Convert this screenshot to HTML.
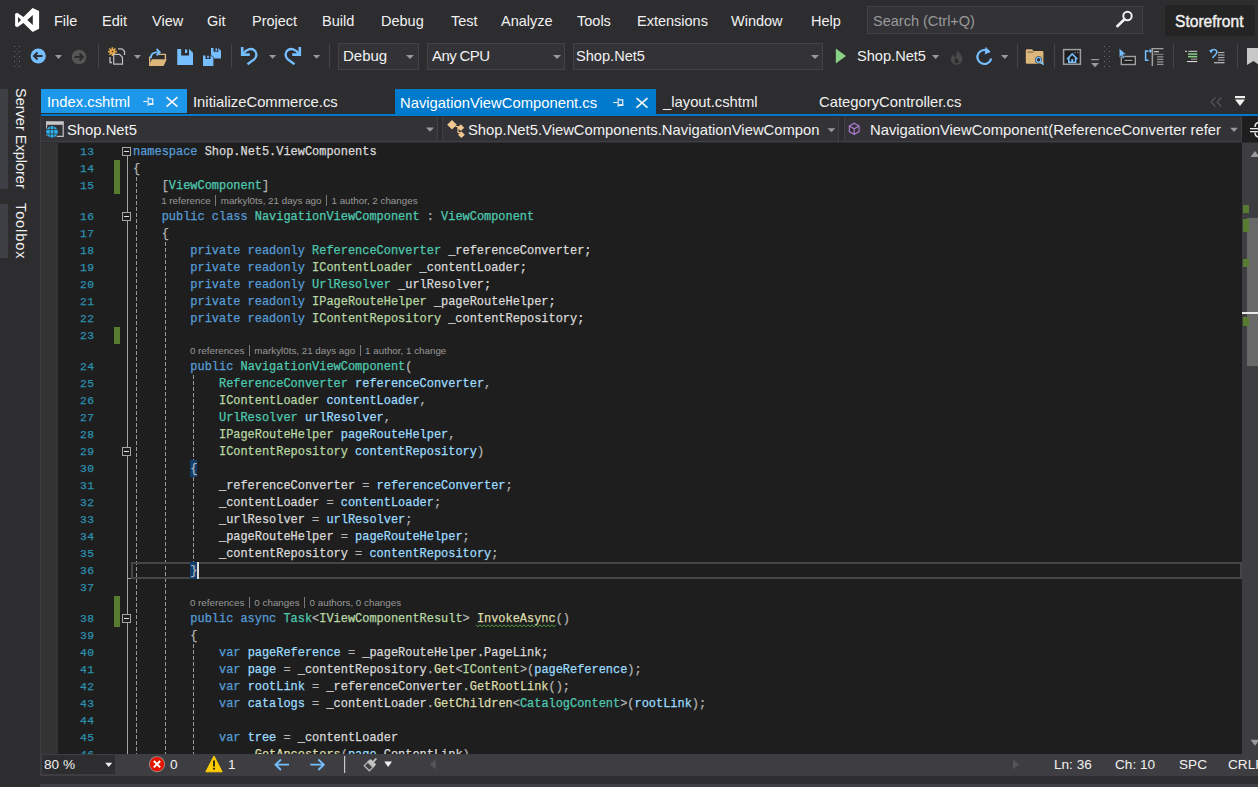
<!DOCTYPE html><html><head><meta charset="utf-8"><style>
html,body{margin:0;padding:0}
body{width:1258px;height:787px;overflow:hidden;background:#2d2d30;position:relative;font-family:"Liberation Sans", sans-serif}
.t,.b,.code,.ln,.cl{position:absolute}
.t{white-space:nowrap}
.code{font-family:"Liberation Mono", monospace;font-size:11.95px;line-height:17px;white-space:pre;height:17px;-webkit-text-stroke:0.25px currentColor}
.ln{font-family:"Liberation Mono", monospace;font-size:11.3px;line-height:17px;color:#2b91af;-webkit-text-stroke:0.25px #2b91af;left:58px;width:36.4px;letter-spacing:0.39px;text-align:right}
.cl{font-size:9.8px;line-height:14px;color:#999999;white-space:pre}
.sep{display:inline-block;width:1px;height:11px;background:#7a7a7a;margin:0 4.5px;vertical-align:-2px}
</style></head><body><svg class="b" style="left:0px;top:0px;" width="44" height="36" viewBox="0 0 44 36"><path d="M32.6 8.1 L39.1 10.9 V28.8 L32.6 32 L23.4 22.9 L17.3 27.2 L15.1 26 V13.8 L17.3 12.7 L23.4 17 Z M32.8 15 V24.9 L27.3 19.9 Z M18.1 16.8 V23.1 L21 19.9 Z" fill="#fff" fill-rule="evenodd"/></svg><div class="t" style="left:54px;top:13px;font-size:14.5px;line-height:16px;color:#f1f1f1;">File</div><div class="t" style="left:102px;top:13px;font-size:14.5px;line-height:16px;color:#f1f1f1;">Edit</div><div class="t" style="left:152px;top:13px;font-size:14.5px;line-height:16px;color:#f1f1f1;">View</div><div class="t" style="left:207px;top:13px;font-size:14.5px;line-height:16px;color:#f1f1f1;">Git</div><div class="t" style="left:252px;top:13px;font-size:14.5px;line-height:16px;color:#f1f1f1;">Project</div><div class="t" style="left:322px;top:13px;font-size:14.5px;line-height:16px;color:#f1f1f1;">Build</div><div class="t" style="left:381px;top:13px;font-size:14.5px;line-height:16px;color:#f1f1f1;">Debug</div><div class="t" style="left:451px;top:13px;font-size:14.5px;line-height:16px;color:#f1f1f1;">Test</div><div class="t" style="left:501px;top:13px;font-size:14.5px;line-height:16px;color:#f1f1f1;">Analyze</div><div class="t" style="left:577px;top:13px;font-size:14.5px;line-height:16px;color:#f1f1f1;">Tools</div><div class="t" style="left:637px;top:13px;font-size:14.5px;line-height:16px;color:#f1f1f1;">Extensions</div><div class="t" style="left:731px;top:13px;font-size:14.5px;line-height:16px;color:#f1f1f1;">Window</div><div class="t" style="left:811px;top:13px;font-size:14.5px;line-height:16px;color:#f1f1f1;">Help</div><div class="b" style="left:867px;top:6px;width:276px;height:28px;background:#333337;box-sizing:border-box;border:1px solid #3f3f46"></div><div class="t" style="left:873px;top:13px;font-size:14.5px;line-height:16px;color:#999999;">Search (Ctrl+Q)</div><div class="b" style="left:1165px;top:5px;width:90px;height:31px;background:#242425;"></div><div class="t" style="left:1175px;top:14px;font-size:15.6px;line-height:16px;color:#f1f1f1;-webkit-text-stroke:0.4px #f1f1f1">Storefront</div><div class="b" style="left:338px;top:43px;width:81px;height:27px;background:#333337;box-sizing:border-box;border:1px solid #434346"></div><div class="t" style="left:343px;top:48px;font-size:15px;line-height:16px;color:#f1f1f1;">Debug</div><svg class="b" style="left:406px;top:55px;" width="8" height="4" viewBox="0 0 8 4"><path d="M0 0 H8 L4 4 Z" fill="#999"/></svg><div class="b" style="left:427px;top:43px;width:138px;height:27px;background:#333337;box-sizing:border-box;border:1px solid #434346"></div><div class="t" style="left:432px;top:48px;font-size:15px;line-height:16px;color:#f1f1f1;letter-spacing:-0.6px">Any CPU</div><svg class="b" style="left:553px;top:55px;" width="8" height="4" viewBox="0 0 8 4"><path d="M0 0 H8 L4 4 Z" fill="#999"/></svg><div class="b" style="left:573px;top:43px;width:250px;height:27px;background:#333337;box-sizing:border-box;border:1px solid #434346"></div><div class="t" style="left:576px;top:48px;font-size:14.6px;line-height:16px;color:#f1f1f1;">Shop.Net5</div><svg class="b" style="left:811px;top:55px;" width="8" height="4" viewBox="0 0 8 4"><path d="M0 0 H8 L4 4 Z" fill="#999"/></svg><div class="b" style="left:0px;top:89px;width:8px;height:100px;background:#3f3f46;"></div><div class="b" style="left:0px;top:204px;width:8px;height:54px;background:#3f3f46;"></div><div class="t" style="left:12px;top:88px;width:18px;height:100px;"><div style="position:absolute;left:0;top:0;transform-origin:0 0;transform:translate(17px,0) rotate(90deg);white-space:nowrap;font-size:14.5px;line-height:17px;color:#f1f1f1">Server Explorer</div></div><div class="t" style="left:12px;top:203px;width:18px;height:60px;"><div style="position:absolute;left:0;top:0;transform-origin:0 0;transform:translate(17px,0) rotate(90deg);white-space:nowrap;font-size:14.5px;line-height:17px;color:#f1f1f1;letter-spacing:0.9px">Toolbox</div></div><div class="b" style="left:41px;top:89px;width:146px;height:24px;background:#1c97ea;"></div><div class="t" style="left:47px;top:94px;font-size:14.8px;line-height:16px;color:#ffffff;">Index.cshtml</div><div class="t" style="left:193px;top:94px;font-size:14.8px;line-height:16px;color:#f1f1f1;">InitializeCommerce.cs</div><div class="b" style="left:395px;top:89px;width:261px;height:25px;background:#007acc;"></div><div class="t" style="left:400px;top:95px;font-size:14.8px;line-height:16px;color:#ffffff;">NavigationViewComponent.cs</div><div class="t" style="left:663px;top:94px;font-size:14.8px;line-height:16px;color:#f1f1f1;">_layout.cshtml</div><div class="t" style="left:819px;top:94px;font-size:14.8px;line-height:16px;color:#f1f1f1;">CategoryController.cs</div><div class="b" style="left:41px;top:114px;width:1217px;height:2px;background:#007acc;"></div><div class="b" style="left:41px;top:116px;width:1201px;height:26px;background:#333337;"></div><div class="b" style="left:41px;top:116px;width:1201px;height:1px;background:#2d2d30;"></div><div class="b" style="left:40px;top:116px;width:1px;height:660px;background:#3f3f46;"></div><div class="b" style="left:438px;top:117px;width:4px;height:25px;background:#2d2d30;"></div><div class="b" style="left:839px;top:117px;width:5px;height:25px;background:#2d2d30;"></div><div class="b" style="left:437px;top:117px;width:1px;height:24px;background:#3f3f46;"></div><div class="b" style="left:442px;top:117px;width:1px;height:24px;background:#3f3f46;"></div><div class="b" style="left:838px;top:117px;width:1px;height:24px;background:#3f3f46;"></div><div class="b" style="left:844px;top:117px;width:1px;height:24px;background:#3f3f46;"></div><div class="b" style="left:1241px;top:117px;width:1px;height:24px;background:#3f3f46;"></div><div class="b" style="left:41px;top:141px;width:1201px;height:1px;background:#3f3f46;"></div><div class="b" style="left:41px;top:142px;width:1201px;height:1px;background:#2d2d30;"></div><div class="t" style="left:67px;top:122px;font-size:14.8px;line-height:16px;color:#f1f1f1;">Shop.Net5</div><div class="t" style="left:468px;top:122px;font-size:14.8px;line-height:16px;color:#f1f1f1;">Shop.Net5.ViewComponents.NavigationViewCompon</div><div class="t" style="left:870px;top:122px;font-size:14.8px;line-height:16px;color:#f1f1f1;">NavigationViewComponent(ReferenceConverter refer</div><div class="b" style="left:41px;top:143px;width:17px;height:611px;background:#333333;"></div><div class="b" style="left:58px;top:143px;width:1184px;height:611px;background:#1e1e1e;"></div><div class="b" style="left:1242px;top:143px;width:16px;height:611px;background:#3e3e42;"></div><div class="b" style="left:114px;top:160px;width:6px;height:34px;background:#587c2f;"></div><div class="b" style="left:114px;top:327px;width:6px;height:17px;background:#587c2f;"></div><div class="b" style="left:114px;top:596px;width:6px;height:31px;background:#587c2f;"></div><div class="b" style="left:127px;top:156px;width:1px;height:598px;background:#a5a5a5;"></div><div class="b" style="left:136px;top:177px;width:1px;height:577px;background:repeating-linear-gradient(to bottom,#9a9a9a 0 4px,transparent 4px 6px)"></div><div class="b" style="left:165px;top:242px;width:1px;height:512px;background:repeating-linear-gradient(to bottom,#9a9a9a 0 4px,transparent 4px 6px)"></div><div class="b" style="left:193px;top:375px;width:1px;height:85px;background:repeating-linear-gradient(to bottom,#9a9a9a 0 4px,transparent 4px 6px)"></div><div class="b" style="left:193px;top:477px;width:1px;height:85px;background:repeating-linear-gradient(to bottom,#9a9a9a 0 4px,transparent 4px 6px)"></div><div class="b" style="left:193px;top:644px;width:1px;height:110px;background:repeating-linear-gradient(to bottom,#9a9a9a 0 4px,transparent 4px 6px)"></div><div class="b" style="left:131px;top:562px;width:1111px;height:17px;background:transparent;box-sizing:border-box;border:2px solid #464646"></div><div class="b" style="left:190px;top:460px;width:7px;height:17px;background:#113d6f;"></div><div class="b" style="left:190px;top:562px;width:7px;height:17px;background:#113d6f;"></div><div class="b" style="left:122px;top:147px;width:9px;height:9px;box-sizing:border-box;border:1px solid #a5a5a5;background:#1e1e1e"><div style="position:absolute;left:1px;top:3px;width:5px;height:1px;background:#e0e0e0"></div></div><div class="b" style="left:122px;top:212px;width:9px;height:9px;box-sizing:border-box;border:1px solid #a5a5a5;background:#1e1e1e"><div style="position:absolute;left:1px;top:3px;width:5px;height:1px;background:#e0e0e0"></div></div><div class="b" style="left:122px;top:447px;width:9px;height:9px;box-sizing:border-box;border:1px solid #a5a5a5;background:#1e1e1e"><div style="position:absolute;left:1px;top:3px;width:5px;height:1px;background:#e0e0e0"></div></div><div class="b" style="left:122px;top:614px;width:9px;height:9px;box-sizing:border-box;border:1px solid #a5a5a5;background:#1e1e1e"><div style="position:absolute;left:1px;top:3px;width:5px;height:1px;background:#e0e0e0"></div></div><div class="b" style="left:127px;top:578px;width:4px;height:1px;background:#a5a5a5;"></div><div class="b" style="left:197px;top:562px;width:1.5px;height:17px;background:#dcdcdc;"></div><div class="ln" style="top:143.5px">13</div><div class="code" style="left:133px;top:144px"><span style="color:#569cd6">namespace</span><span style="color:#dadada"> Shop.Net5.ViewComponents</span></div><div class="ln" style="top:160.5px">14</div><div class="code" style="left:133px;top:161px"><span style="color:#b4b4b4">{</span></div><div class="ln" style="top:177.5px">15</div><div class="code" style="left:133px;top:178px"><span style="color:#b4b4b4">    [</span><span style="color:#4ec9b0">ViewComponent</span><span style="color:#b4b4b4">]</span></div><div class="cl" style="left:161.2px;top:194px">1 reference<i class="sep"></i>markyl0ts, 21 days ago<i class="sep"></i>1 author, 2 changes</div><div class="ln" style="top:208.5px">16</div><div class="code" style="left:133px;top:209px"><span style="color:#569cd6">    public class </span><span style="color:#4ec9b0">NavigationViewComponent</span><span style="color:#b4b4b4"> : </span><span style="color:#4ec9b0">ViewComponent</span></div><div class="ln" style="top:225.5px">17</div><div class="code" style="left:133px;top:226px"><span style="color:#b4b4b4">    {</span></div><div class="ln" style="top:242.5px">18</div><div class="code" style="left:133px;top:243px"><span style="color:#569cd6">        private readonly </span><span style="color:#4ec9b0">ReferenceConverter</span><span style="color:#dadada"> _referenceConverter;</span></div><div class="ln" style="top:259.5px">19</div><div class="code" style="left:133px;top:260px"><span style="color:#569cd6">        private readonly </span><span style="color:#b8d7a3">IContentLoader</span><span style="color:#dadada"> _contentLoader;</span></div><div class="ln" style="top:276.5px">20</div><div class="code" style="left:133px;top:277px"><span style="color:#569cd6">        private readonly </span><span style="color:#4ec9b0">UrlResolver</span><span style="color:#dadada"> _urlResolver;</span></div><div class="ln" style="top:293.5px">21</div><div class="code" style="left:133px;top:294px"><span style="color:#569cd6">        private readonly </span><span style="color:#b8d7a3">IPageRouteHelper</span><span style="color:#dadada"> _pageRouteHelper;</span></div><div class="ln" style="top:310.5px">22</div><div class="code" style="left:133px;top:311px"><span style="color:#569cd6">        private readonly </span><span style="color:#b8d7a3">IContentRepository</span><span style="color:#dadada"> _contentRepository;</span></div><div class="ln" style="top:327.5px">23</div><div class="code" style="left:133px;top:328px"></div><div class="cl" style="left:189.9px;top:344px">0 references<i class="sep"></i>markyl0ts, 21 days ago<i class="sep"></i>1 author, 1 change</div><div class="ln" style="top:358.5px">24</div><div class="code" style="left:133px;top:359px"><span style="color:#569cd6">        public </span><span style="color:#4ec9b0">NavigationViewComponent</span><span style="color:#b4b4b4">(</span></div><div class="ln" style="top:375.5px">25</div><div class="code" style="left:133px;top:376px"><span style="color:#4ec9b0">            ReferenceConverter</span><span style="color:#dadada"> </span><span style="color:#9cdcfe">referenceConverter</span><span style="color:#b4b4b4">,</span></div><div class="ln" style="top:392.5px">26</div><div class="code" style="left:133px;top:393px"><span style="color:#b8d7a3">            IContentLoader</span><span style="color:#dadada"> </span><span style="color:#9cdcfe">contentLoader</span><span style="color:#b4b4b4">,</span></div><div class="ln" style="top:409.5px">27</div><div class="code" style="left:133px;top:410px"><span style="color:#4ec9b0">            UrlResolver</span><span style="color:#dadada"> </span><span style="color:#9cdcfe">urlResolver</span><span style="color:#b4b4b4">,</span></div><div class="ln" style="top:426.5px">28</div><div class="code" style="left:133px;top:427px"><span style="color:#b8d7a3">            IPageRouteHelper</span><span style="color:#dadada"> </span><span style="color:#9cdcfe">pageRouteHelper</span><span style="color:#b4b4b4">,</span></div><div class="ln" style="top:443.5px">29</div><div class="code" style="left:133px;top:444px"><span style="color:#b8d7a3">            IContentRepository</span><span style="color:#dadada"> </span><span style="color:#9cdcfe">contentRepository</span><span style="color:#b4b4b4">)</span></div><div class="ln" style="top:460.5px">30</div><div class="code" style="left:133px;top:461px"><span style="color:#b4b4b4">        {</span></div><div class="ln" style="top:477.5px">31</div><div class="code" style="left:133px;top:478px"><span style="color:#dadada">            _referenceConverter</span><span style="color:#b4b4b4"> = </span><span style="color:#9cdcfe">referenceConverter</span><span style="color:#b4b4b4">;</span></div><div class="ln" style="top:494.5px">32</div><div class="code" style="left:133px;top:495px"><span style="color:#dadada">            _contentLoader</span><span style="color:#b4b4b4"> = </span><span style="color:#9cdcfe">contentLoader</span><span style="color:#b4b4b4">;</span></div><div class="ln" style="top:511.5px">33</div><div class="code" style="left:133px;top:512px"><span style="color:#dadada">            _urlResolver</span><span style="color:#b4b4b4"> = </span><span style="color:#9cdcfe">urlResolver</span><span style="color:#b4b4b4">;</span></div><div class="ln" style="top:528.5px">34</div><div class="code" style="left:133px;top:529px"><span style="color:#dadada">            _pageRouteHelper</span><span style="color:#b4b4b4"> = </span><span style="color:#9cdcfe">pageRouteHelper</span><span style="color:#b4b4b4">;</span></div><div class="ln" style="top:545.5px">35</div><div class="code" style="left:133px;top:546px"><span style="color:#dadada">            _contentRepository</span><span style="color:#b4b4b4"> = </span><span style="color:#9cdcfe">contentRepository</span><span style="color:#b4b4b4">;</span></div><div class="ln" style="top:562.5px">36</div><div class="code" style="left:133px;top:563px"><span style="color:#b4b4b4">        }</span></div><div class="ln" style="top:579.5px">37</div><div class="code" style="left:133px;top:580px"></div><div class="cl" style="left:189.9px;top:596px">0 references<i class="sep"></i>0 changes<i class="sep"></i>0 authors, 0 changes</div><div class="ln" style="top:610.5px">38</div><div class="code" style="left:133px;top:611px"><span style="color:#569cd6">        public async </span><span style="color:#4ec9b0">Task</span><span style="color:#b4b4b4">&lt;</span><span style="color:#b8d7a3">IViewComponentResult</span><span style="color:#b4b4b4">&gt; </span><span style="color:#dcdcaa">InvokeAsync</span><span style="color:#b4b4b4">()</span></div><div class="ln" style="top:627.5px">39</div><div class="code" style="left:133px;top:628px"><span style="color:#b4b4b4">        {</span></div><div class="ln" style="top:644.5px">40</div><div class="code" style="left:133px;top:645px"><span style="color:#569cd6">            var </span><span style="color:#9cdcfe">pageReference</span><span style="color:#b4b4b4"> = </span><span style="color:#dadada">_pageRouteHelper</span><span style="color:#dadada">.PageLink;</span></div><div class="ln" style="top:661.5px">41</div><div class="code" style="left:133px;top:662px"><span style="color:#569cd6">            var </span><span style="color:#9cdcfe">page</span><span style="color:#b4b4b4"> = </span><span style="color:#dadada">_contentRepository</span><span style="color:#b4b4b4">.</span><span style="color:#dcdcaa">Get</span><span style="color:#b4b4b4">&lt;</span><span style="color:#b8d7a3">IContent</span><span style="color:#b4b4b4">&gt;(</span><span style="color:#9cdcfe">pageReference</span><span style="color:#b4b4b4">);</span></div><div class="ln" style="top:678.5px">42</div><div class="code" style="left:133px;top:679px"><span style="color:#569cd6">            var </span><span style="color:#9cdcfe">rootLink</span><span style="color:#b4b4b4"> = </span><span style="color:#dadada">_referenceConverter</span><span style="color:#b4b4b4">.</span><span style="color:#dcdcaa">GetRootLink</span><span style="color:#b4b4b4">();</span></div><div class="ln" style="top:695.5px">43</div><div class="code" style="left:133px;top:696px"><span style="color:#569cd6">            var </span><span style="color:#9cdcfe">catalogs</span><span style="color:#b4b4b4"> = </span><span style="color:#dadada">_contentLoader</span><span style="color:#b4b4b4">.</span><span style="color:#dcdcaa">GetChildren</span><span style="color:#b4b4b4">&lt;</span><span style="color:#4ec9b0">CatalogContent</span><span style="color:#b4b4b4">&gt;(</span><span style="color:#9cdcfe">rootLink</span><span style="color:#b4b4b4">);</span></div><div class="ln" style="top:712.5px">44</div><div class="code" style="left:133px;top:713px"></div><div class="ln" style="top:729.5px">45</div><div class="code" style="left:133px;top:730px"><span style="color:#569cd6">            var </span><span style="color:#9cdcfe">tree</span><span style="color:#b4b4b4"> = </span><span style="color:#dadada">_contentLoader</span></div><div class="ln" style="top:746.5px">46</div><div class="code" style="left:133px;top:747px"><span style="color:#b4b4b4">                .</span><span style="color:#dcdcaa">GetAncestors</span><span style="color:#b4b4b4">(</span><span style="color:#9cdcfe">page</span><span style="color:#b4b4b4">.</span><span style="color:#dadada">ContentLink</span><span style="color:#b4b4b4">)</span></div><div class="b" style="left:40px;top:754px;width:1218px;height:22px;background:#3e3e42;"></div><div class="b" style="left:42px;top:755px;width:73px;height:19px;background:#2d2d30;"></div><div class="t" style="left:44px;top:757px;font-size:13.6px;line-height:16px;color:#f1f1f1;">80 %</div><div class="t" style="left:170px;top:757px;font-size:13.6px;line-height:16px;color:#f1f1f1;">0</div><div class="t" style="left:228px;top:757px;font-size:13.6px;line-height:16px;color:#f1f1f1;">1</div><div class="t" style="left:1054px;top:757px;font-size:13.6px;line-height:16px;color:#f1f1f1;">Ln: 36</div><div class="t" style="left:1115px;top:757px;font-size:13.6px;line-height:16px;color:#f1f1f1;">Ch: 10</div><div class="t" style="left:1179px;top:757px;font-size:13.6px;line-height:16px;color:#f1f1f1;">SPC</div><div class="t" style="left:1228px;top:757px;font-size:13.6px;line-height:16px;color:#f1f1f1;">CRLF</div><div class="t" style="left:857px;top:48px;font-size:14.6px;line-height:16px;color:#f1f1f1;">Shop.Net5</div><div class="b" style="left:1247px;top:218px;width:11px;height:148px;background:#686868;"></div><div class="b" style="left:1243px;top:204.7px;width:5.5px;height:8.600000000000023px;background:#587c2f;"></div><div class="b" style="left:1243px;top:218.8px;width:5.5px;height:13.399999999999977px;background:#587c2f;"></div><div class="b" style="left:1243px;top:258.5px;width:5.5px;height:8.199999999999989px;background:#587c2f;"></div><div class="b" style="left:1243px;top:316.5px;width:5.5px;height:9.800000000000011px;background:#587c2f;"></div><div class="b" style="left:1242px;top:312px;width:16px;height:2px;background:#e8e8e8;"></div><div class="b" style="left:1242px;top:116px;width:16px;height:26px;background:#1e1e1e;"></div><svg class="b" style="left:476px;top:624px" width="80" height="4" viewBox="0 0 80 4"><path d="M0 0.8 L2 2.8 L4 0.8 L6 2.8 L8 0.8 L10 2.8 L12 0.8 L14 2.8 L16 0.8 L18 2.8 L20 0.8 L22 2.8 L24 0.8 L26 2.8 L28 0.8 L30 2.8 L32 0.8 L34 2.8 L36 0.8 L38 2.8 L40 0.8 L42 2.8 L44 0.8 L46 2.8 L48 0.8 L50 2.8 L52 0.8 L54 2.8 L56 0.8 L58 2.8 L60 0.8 L62 2.8 L64 0.8 L66 2.8 L68 0.8 L70 2.8 L72 0.8 L74 2.8 L76 0.8 L78 2.8 L80 0.8" stroke="#57a64a" stroke-width="1" fill="none"/></svg><div class="b" style="left:40px;top:784px;width:1218px;height:3px;background:#3f3f46;"></div><svg class="b" style="left:0;top:0" width="1258" height="787" viewBox="0 0 1258 787"><rect x="14" y="46" width="1" height="1" fill="#6e6e6e"/><rect x="19" y="46" width="1" height="1" fill="#6e6e6e"/><rect x="16.5" y="48.5" width="1" height="1" fill="#5a5a5a"/><rect x="14" y="51" width="1" height="1" fill="#6e6e6e"/><rect x="19" y="51" width="1" height="1" fill="#6e6e6e"/><rect x="16.5" y="53.5" width="1" height="1" fill="#5a5a5a"/><rect x="14" y="56" width="1" height="1" fill="#6e6e6e"/><rect x="19" y="56" width="1" height="1" fill="#6e6e6e"/><rect x="16.5" y="58.5" width="1" height="1" fill="#5a5a5a"/><rect x="14" y="61" width="1" height="1" fill="#6e6e6e"/><rect x="19" y="61" width="1" height="1" fill="#6e6e6e"/><rect x="16.5" y="63.5" width="1" height="1" fill="#5a5a5a"/><rect x="14" y="66" width="1" height="1" fill="#6e6e6e"/><rect x="19" y="66" width="1" height="1" fill="#6e6e6e"/><rect x="1104" y="46" width="1" height="1" fill="#6e6e6e"/><rect x="1109" y="46" width="1" height="1" fill="#6e6e6e"/><rect x="1106.5" y="48.5" width="1" height="1" fill="#5a5a5a"/><rect x="1104" y="51" width="1" height="1" fill="#6e6e6e"/><rect x="1109" y="51" width="1" height="1" fill="#6e6e6e"/><rect x="1106.5" y="53.5" width="1" height="1" fill="#5a5a5a"/><rect x="1104" y="56" width="1" height="1" fill="#6e6e6e"/><rect x="1109" y="56" width="1" height="1" fill="#6e6e6e"/><rect x="1106.5" y="58.5" width="1" height="1" fill="#5a5a5a"/><rect x="1104" y="61" width="1" height="1" fill="#6e6e6e"/><rect x="1109" y="61" width="1" height="1" fill="#6e6e6e"/><rect x="1106.5" y="63.5" width="1" height="1" fill="#5a5a5a"/><rect x="1104" y="66" width="1" height="1" fill="#6e6e6e"/><rect x="1109" y="66" width="1" height="1" fill="#6e6e6e"/><circle cx="38.2" cy="56" r="7.6" fill="#75beff"/><path d="M42.5 56 H34.5 M37.5 52.5 L34 56 L37.5 59.5" stroke="#2d2d30" stroke-width="2" fill="none"/><path d="M55 55 H62 L58.5 59 Z" fill="#999999"/><circle cx="79" cy="57" r="7.3" fill="#555555"/><path d="M74.5 57 H82.5 M79.5 53.5 L83 57 L79.5 60.5" stroke="#2d2d30" stroke-width="2" fill="none"/><rect x="98" y="44" width="1" height="24" fill="#464646"/><rect x="231" y="44" width="1" height="24" fill="#464646"/><rect x="329" y="44" width="1" height="24" fill="#464646"/><rect x="1017" y="44" width="1" height="24" fill="#464646"/><rect x="1054" y="44" width="1" height="24" fill="#464646"/><rect x="1173" y="44" width="1" height="24" fill="#464646"/><rect x="1237" y="44" width="1" height="24" fill="#464646"/><path d="M112.4 47.2 V56 M108 51.6 H116.8 M109.3 48.5 L115.5 54.7 M115.5 48.5 L109.3 54.7" stroke="#e8a94a" stroke-width="1.6"/><circle cx="112.4" cy="51.6" r="2.2" fill="#e8a94a"/><circle cx="112.4" cy="51.6" r="0.8" fill="#2d2d30"/><path d="M118 48.8 H122 L124.5 51.3 V55" stroke="#c0c0c0" stroke-width="1.3" fill="none"/><path d="M110 57 V62.5 H112" stroke="#c0c0c0" stroke-width="1.3" fill="none"/><path d="M113.7 54.3 H119.5 L122.5 57.3 V64.2 H113.7 Z" stroke="#c0c0c0" stroke-width="1.2" fill="#333337"/><path d="M134 55 H141 L137.5 59 Z" fill="#999999"/><path d="M149.7 65.5 V56.5 M157.6 54.4 H165.4 V59.5" stroke="#dcb67a" stroke-width="1.4" fill="none"/><path d="M151.8 59.3 H166.8 L163.6 65.9 H149 Z" fill="#dcb67a"/><path d="M151 58.2 C150.6 53.8 153.5 52.2 158.8 52.2" stroke="#75beff" stroke-width="1.8" fill="none"/><path d="M156.6 49 L159.8 52.2 L156.6 55.4" stroke="#75beff" stroke-width="1.8" fill="none"/><path d="M177.2 48.9 H189.2 L193 52.7 V65 H177.2 Z M181.2 48.9 V55.6 H189 V48.9 Z" fill="#75beff" fill-rule="evenodd"/><rect x="185" y="49.5" width="2.2" height="3.5" fill="#75beff"/><path d="M211 48.1 H218.3 L221 50.8 V58.4 H211 Z M213.5 48.1 V51.8 H218.3 V48.1 Z" fill="#75beff" fill-rule="evenodd"/><path d="M210.8 55.4 L214 58.6 M209 56.4" stroke="#2d2d30" stroke-width="1.2"/><path d="M203 55.4 H210.8 L213.4 58 V65.9 H203 Z M205.5 55.4 V59 H210.5 V55.4 Z" fill="#75beff" fill-rule="evenodd"/><rect x="207.2" y="55.8" width="1.6" height="2.4" fill="#75beff"/><rect x="215.5" y="48.4" width="1.6" height="2.4" fill="#75beff"/><g ><path d="M242.2 47 V54.6 H249.8" stroke="#75beff" stroke-width="2.6" fill="none"/><path d="M243.4 53.4 C246.5 49 251 48 254 50 C257.3 52.4 257 56.6 254.4 59.2 L247.5 64.2" stroke="#75beff" stroke-width="2.4" fill="none"/></g><g transform="translate(542 0) scale(-1 1)"><path d="M242.2 47 V54.6 H249.8" stroke="#75beff" stroke-width="2.6" fill="none"/><path d="M243.4 53.4 C246.5 49 251 48 254 50 C257.3 52.4 257 56.6 254.4 59.2 L247.5 64.2" stroke="#75beff" stroke-width="2.4" fill="none"/></g><path d="M269 55 H276.2 L272.6 58.8 Z" fill="#999999"/><path d="M313 55 H320.2 L316.6 58.8 Z" fill="#999999"/><path d="M835.8 48.5 L846 56 L835.8 63.5 Z" fill="#89d185"/><path d="M932 55 H939.3 L935.65 59 Z" fill="#999999"/><path d="M956.5 50.2 C960.5 53 962.8 56.5 962.3 60 C961.8 63.2 959.3 64.8 956.6 64.8 C953.3 64.8 950.8 62.6 950.8 59.6 C950.8 57.4 952 55.6 953.2 54.2 C953.4 55.8 954 57 955 57.6 C956.6 55.4 957.2 52.8 956.5 50.2 Z M956.6 63.3 C955 63.3 954.2 62 954.4 60.6 C954.6 59.4 955.5 58.6 956.2 57.6 C956.8 59 958.6 59.6 958.7 61 C958.8 62.4 957.8 63.3 956.6 63.3 Z" fill="#4a4a4a" fill-rule="evenodd"/><path d="M989.5 52.2 A7 7 0 1 0 991.2 58.5" stroke="#75beff" stroke-width="2.2" fill="none"/><path d="M985.5 46.8 L990.5 51.8 L984.8 54.6 Z" fill="#75beff"/><path d="M1001 55 H1008.5 L1004.75 59 Z" fill="#999999"/><path d="M1025.8 50.5 Q1025.8 49.3 1027 49.3 H1032 L1033.5 51 H1042.2 Q1043.4 51 1043.4 52.2 V62.6 Q1043.4 63.8 1042.2 63.8 H1027 Q1025.8 63.8 1025.8 62.6 Z" fill="#dcb67a"/><rect x="1027.5" y="51.6" width="6" height="1" fill="#2d2d30" opacity="0.6"/><circle cx="1038.6" cy="59.8" r="3.6" fill="#2d2d30"/><circle cx="1038.6" cy="59.8" r="2.4" stroke="#75beff" stroke-width="1.4" fill="none"/><path d="M1040.5 61.7 L1043.6 64.6" stroke="#75beff" stroke-width="1.8"/><rect x="1063.6" y="49.6" width="16.8" height="14.6" stroke="#a0a0a0" stroke-width="1.5" fill="#1e1e1e"/><rect x="1074.5" y="52" width="1.2" height="1.2" fill="#a0a0a0"/><rect x="1077.3" y="52" width="1.2" height="1.2" fill="#a0a0a0"/><path d="M1067 59.2 L1072.2 54 L1077.4 59.2" stroke="#75beff" stroke-width="1.6" fill="none"/><path d="M1068.8 57.8 V62.3 H1075.6 V57.8" stroke="#75beff" stroke-width="1.6" fill="none"/><rect x="1071.3" y="59" width="1.8" height="3" fill="#75beff"/><rect x="1091" y="59" width="8" height="1.2" fill="#999"/><path d="M1091 63 H1099 L1095.0 67.3 Z" fill="#999999"/><rect x="1121.3" y="56.5" width="14" height="8" stroke="#a0a0a0" stroke-width="1.4" fill="#1e1e1e"/><rect x="1124.5" y="59.8" width="8" height="1.2" fill="#a0a0a0"/><path d="M1119.2 48.2 L1126.2 54.5 L1123 54.8 L1124.6 58 L1122.8 58.8 L1121.3 55.6 L1119.2 57.7 Z" fill="#75beff" stroke="#2d2d30" stroke-width="0.6"/><path d="M1148.6 51 H1145.6 V60.2 H1148.6" stroke="#75beff" stroke-width="1.5" fill="none"/><path d="M1149 51 H1151.3 M1149.8 49.5 L1151.3 51 L1149.8 52.5" stroke="#75beff" stroke-width="1.2" fill="none"/><rect x="1151.6" y="48" width="1.5" height="18" fill="#a0a0a0"/><rect x="1151.6" y="48" width="11.8" height="1.3" fill="#a0a0a0"/><rect x="1154" y="51.2" width="5" height="1.1" fill="#e0e0e0"/><rect x="1153.5" y="53.8" width="9.9" height="1.1" fill="#808080"/><rect x="1157" y="56.3" width="6.4" height="1.1" fill="#a0a0a0"/><rect x="1157" y="58.8" width="6.4" height="1.1" fill="#a0a0a0"/><rect x="1157" y="61.3" width="6.4" height="1.1" fill="#a0a0a0"/><rect x="1157" y="63.8" width="6.4" height="1.1" fill="#a0a0a0"/><rect x="1185" y="50.8" width="2" height="1.1" fill="#d0d0d0"/><rect x="1188.5" y="50.8" width="8.7" height="1.1" fill="#c8c8c8"/><rect x="1188" y="53.3" width="9.2" height="1.5" fill="#89d185"/><rect x="1188" y="55.9" width="9.2" height="1.5" fill="#89d185"/><rect x="1191" y="58.6" width="6.2" height="1.1" fill="#a0a0a0"/><rect x="1187" y="61" width="10.2" height="1.1" fill="#d8d8d8"/><path d="M1210.5 51.5 C1212 49 1216 48.8 1216.8 51.5 C1217.3 53.5 1215.5 55 1212.5 57.8" stroke="#75beff" stroke-width="1.6" fill="none"/><path d="M1209 50 L1211.2 53.5 L1212.8 50.5 Z" fill="#75beff"/><rect x="1218" y="52" width="6.5" height="1.1" fill="#b0b0b0"/><rect x="1218" y="54.5" width="6.5" height="1.1" fill="#b0b0b0"/><rect x="1218" y="57" width="6.5" height="1.1" fill="#b0b0b0"/><rect x="1218" y="59.5" width="6.5" height="1.1" fill="#b0b0b0"/><rect x="1214" y="62.2" width="10.5" height="1.1" fill="#d0d0d0"/><path d="M1247 48.1 H1259 V64.9 L1253.5 61 L1247 64.9 Z" fill="#c8c8c8"/><circle cx="1127.5" cy="16" r="4.2" stroke="#f1f1f1" stroke-width="2" fill="none"/><path d="M1124.5 19.2 L1117.3 26.2" stroke="#f1f1f1" stroke-width="2.6" stroke-linecap="round"/><path d="M143.2 101.5 H147.7" stroke="#f0f0f0" stroke-width="1.1"/><rect x="147.6" y="97" width="1.1" height="9" fill="#f0f0f0"/><path d="M148.7 98.8 H152.7 V104.3 H148.7" stroke="#f0f0f0" stroke-width="1.2" fill="none"/><rect x="148.7" y="103.2" width="4.6" height="1.4" fill="#f0f0f0"/><path d="M166.5 97.2 L177.5 106.7 M177.5 97.2 L166.5 106.7" stroke="#f4f4f4" stroke-width="1.7"/><path d="M613.2 102.5 H617.7" stroke="#f0f0f0" stroke-width="1.1"/><rect x="617.6" y="98" width="1.1" height="9" fill="#f0f0f0"/><path d="M618.7 99.8 H622.7 V105.3 H618.7" stroke="#f0f0f0" stroke-width="1.2" fill="none"/><rect x="618.7" y="104.2" width="4.6" height="1.4" fill="#f0f0f0"/><path d="M636.5 98.2 L647.5 107.7 M647.5 98.2 L636.5 107.7" stroke="#f4f4f4" stroke-width="1.7"/><path d="M1215.5 97.5 L1211 102 L1215.5 106.5 M1221.5 97.5 L1217 102 L1221.5 106.5" stroke="#555" stroke-width="1.3" fill="none"/><rect x="1235" y="96" width="10" height="2.2" fill="#f1f1f1"/><path d="M1235 99.5 H1245 L1240 106 Z" fill="#f1f1f1"/><path d="M46.6 135.8 V121.8 H63.2 V136.3 H52" stroke="#c0c0c0" stroke-width="1.2" fill="none"/><rect x="46.6" y="121.8" width="16.6" height="3" fill="#c8c8c8"/><circle cx="52" cy="131.8" r="6.6" fill="#333337"/><circle cx="52" cy="131.8" r="5.8" fill="#2cb2ee"/><path d="M46.5 129.5 H57.5 M46.5 134 H57.5 M50.2 126 V137.5 M53.8 126 V137.5" stroke="#333337" stroke-width="0.8"/><path d="M426 127.6 H434 L430.0 131.7 Z" fill="#999999"/><path d="M452 120 L456.8 124.8 L452 129.6 L447.2 124.8 Z" fill="#f0c890"/><path d="M460.8 124.3 L464.2 127.7 L460.8 131.1 L457.4 127.7 Z" fill="#f0c890"/><path d="M461.4 131.3 L464.8 134.7 L461.4 138.1 L458 134.7 Z" fill="#f0c890"/><path d="M455.5 126.5 H458 V132.5 H460" stroke="#f0c890" stroke-width="1.2" fill="none"/><path d="M827.5 128.2 H835.3 L831.4 132.2 Z" fill="#999999"/><path d="M854.2 123.2 L859.1 126 V131.6 L854.2 134.4 L849.3 131.6 V126 Z M849.3 126 L854.2 128.8 L859.1 126 M854.2 128.8 V134.4" stroke="#b180d7" stroke-width="1.1" fill="none"/><path d="M1230.3 127.8 H1237.7 L1234.0 132.0 Z" fill="#999999"/><rect x="1250" y="128" width="10" height="1.3" fill="#e8e8e8"/><rect x="1250" y="131" width="10" height="1.3" fill="#e8e8e8"/><path d="M1255 127 C1255 124 1256 123 1258 122.5 M1255 132.5 C1255 135.5 1256 136.5 1258 137" stroke="#e8e8e8" stroke-width="1.4" fill="none"/><path d="M1255 151 L1259.5 157 H1250.5 Z" fill="#999"/><path d="M1250.5 739.8 H1259.5 L1255 745.8 Z" fill="#999"/><path d="M105.2 762.7 H112.2 L108.7 767.1 Z" fill="#f1f1f1"/><circle cx="157" cy="764.2" r="8" fill="#9a9a9a"/><circle cx="157" cy="764.2" r="7.2" fill="#e51400"/><path d="M153.8 761 L160.2 767.4 M160.2 761 L153.8 767.4" stroke="#fff" stroke-width="2"/><path d="M214 756 L222.2 771.8 H205.8 Z" fill="#ffcc00" stroke="#ffcc00" stroke-width="1" stroke-linejoin="round"/><rect x="213.1" y="760.5" width="1.8" height="6" fill="#1e1e1e"/><rect x="213.1" y="767.8" width="1.8" height="1.8" fill="#1e1e1e"/><path d="M289 764.7 H276 M281 759.5 L275.5 764.7 L281 770" stroke="#75beff" stroke-width="1.8" fill="none"/><path d="M310.3 764.7 H323.3 M318.3 759.5 L323.8 764.7 L318.3 770" stroke="#75beff" stroke-width="1.8" fill="none"/><rect x="344" y="756" width="1.2" height="17" fill="#c8c8c8"/><g transform="translate(370 765) rotate(135)"><path d="M-4.8 -3 Q-4.8 -4.2 -2.5 -4.2 H-0.5 V4.2 H-2.5 Q-4.8 4.2 -4.8 3 Z" fill="#c4c4c4"/><rect x="-0.5" y="-3.6" width="5" height="7.2" stroke="#b4b4b4" stroke-width="1.3" fill="none"/><rect x="-9" y="-0.9" width="4.5" height="1.8" fill="#c4c4c4"/></g><path d="M384.3 761.6 H392 L388.15 766.9 Z" fill="#f1f1f1"/><path d="M435.7 759.3 V769.5 L430 764.4 Z" fill="#555"/><path d="M1013 759.3 V769.5 L1018.8 764.4 Z" fill="#555"/></svg></body></html>
